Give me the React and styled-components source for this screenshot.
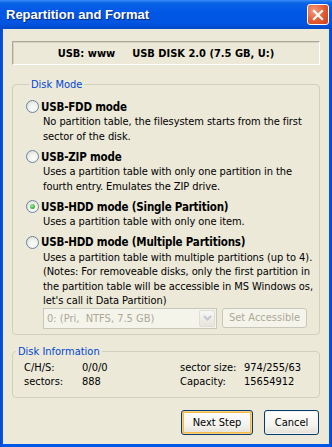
import styled, { createGlobalStyle, css } from 'styled-components';

const GlobalStyle = createGlobalStyle`
  html, body {
    margin: 0;
    padding: 0;
    background: #fff;
  }
  body {
    font-family: "DejaVu Sans Condensed", "DejaVu Sans", sans-serif;
    font-size: 11px;
    color: #000;
  }
`;

const Window = styled.div`
  width: 332px;
  height: 447px;
  display: flex;
  flex-direction: column;
`;

const TitleBar = styled.div`
  height: 29px;
  flex: none;
  display: flex;
  align-items: center;
  justify-content: space-between;
  padding: 0 3px 0 6px;
  background: linear-gradient(
    to bottom,
    #3b8cf5 0,
    #0a62e4 3px,
    #0058e6 40%,
    #0055e0 80%,
    #0348c8 100%
  );
`;

const Title = styled.span`
  font-family: "Liberation Sans", Arial, sans-serif;
  font-weight: bold;
  font-size: 13px;
  color: #fff;
  text-shadow: 1px 1px 0 #0a2a7a;
`;

const CloseButton = styled.button`
  width: 22px;
  height: 21px;
  padding: 0;
  border: 1px solid #fff;
  border-radius: 3px;
  background: radial-gradient(circle at 30% 30%, #f39b7c 0, #e3592f 55%, #c8401b 100%);
  display: flex;
  align-items: center;
  justify-content: center;
`;

const Frame = styled.div`
  flex: 1;
  display: flex;
  padding: 0 3px 3px;
  background: linear-gradient(to right, #0a3fc8, #0058e6 2px, #0058e6 calc(100% - 2px), #0a3fc8);
`;

const Body = styled.div`
  flex: 1;
  background: #ece9d8;
  padding: 12px 9px 0;
  display: flex;
  flex-direction: column;
`;

const DeviceBar = styled.div`
  height: 24px;
  box-sizing: border-box;
  border: 1px solid;
  border-color: #aca899 #fff #fff #aca899;
  box-shadow: inset 1px 1px 0 #d6d3c5;
  display: flex;
  align-items: center;
  justify-content: center;
  gap: 17px;
  font-weight: bold;
  font-size: 11px;
`;

const Group = styled.fieldset`
  margin: ${p => p.$top}px 0 0;
  padding: ${p => p.$pad};
  border: 1px solid #d0d0bf;
  border-radius: 4px;
  min-width: 0;
`;

const Legend = styled.legend`
  color: #0046d5;
  padding: 0 2px;
  margin-left: 3px;
`;

const Option = styled.div`
  display: flex;
  flex-direction: column;
  margin-top: ${p => p.$gap}px;
`;

const OptionHead = styled.label`
  display: flex;
  align-items: center;
  gap: 2px;
  font-weight: bold;
  font-size: 11.5px;
  letter-spacing: -0.2px;
  height: 15px;
`;

const Radio = styled.span`
  width: 13px;
  height: 13px;
  box-sizing: border-box;
  border-radius: 50%;
  border: 1px solid #6a86a4;
  background: radial-gradient(circle at 60% 65%, #fff 0, #f2f2ec 45%, #d6d5cc 100%);
  position: relative;
  flex: none;
  ${p =>
    p.$checked &&
    css`
      &::after {
        content: '';
        position: absolute;
        left: 3px;
        top: 3px;
        width: 5px;
        height: 5px;
        border-radius: 50%;
        background: radial-gradient(circle at 40% 35%, #9cf09c, #2ca42c 75%);
      }
    `}
`;

const Desc = styled.div`
  padding-left: 17px;
  line-height: 14.5px;
  margin-top: 1px;
  letter-spacing: -0.07px;
`;

const PartitionRow = styled.div`
  display: flex;
  gap: 5px;
  padding-left: 17px;
  margin-top: -1px;
`;

const Combo = styled.div`
  width: 174px;
  height: 21px;
  box-sizing: border-box;
  border: 1px solid #c9c7ba;
  background: #f5f4ea;
  display: flex;
  align-items: center;
  justify-content: space-between;
  padding: 0 1px 0 3px;
  color: #aca899;
  white-space: pre;
`;

const ComboArrow = styled.span`
  width: 16px;
  height: 17px;
  border-radius: 2px;
  background: linear-gradient(to bottom, #f7f7f4, #e6e4dc);
  border: 1px solid #e0ded4;
  box-sizing: border-box;
  display: flex;
  align-items: center;
  justify-content: center;
`;

const GhostButton = styled.button`
  width: 85px;
  height: 20px;
  font: inherit;
  color: #aca899;
  background: #f5f4ea;
  border: 1px solid #c9c7ba;
  border-radius: 3px;
  padding: 0;
`;

const InfoGrid = styled.div`
  display: grid;
  grid-template-columns: 58px 98px 64px auto;
  row-gap: 1px;
  line-height: 13px;
  padding-left: 11px;
`;

const Footer = styled.div`
  display: flex;
  justify-content: flex-end;
  gap: 11px;
  margin-top: 12px;
  padding-right: 1px;
`;

const XPButton = styled.button`
  width: ${p => p.$w}px;
  height: 25px;
  font: inherit;
  font-size: 11px;
  color: #000;
  padding: 0;
  border: 1px solid #003c74;
  border-radius: 3px;
  background: linear-gradient(to bottom, #fff 0, #f4f3ee 60%, #e3e1d7 100%);
  ${p =>
    p.$default
      ? css`
          box-shadow: inset 0 0 0 1px #f8d080, inset 0 0 0 2px #f5b84a;
        `
      : css`
          box-shadow: inset 0 0 0 1px #f3f2ee;
        `}
`;

const options = [
  {
    title: 'USB-FDD mode',
    desc: 'No partition table, the filesystem starts from the first sector of the disk.',
  },
  {
    title: 'USB-ZIP mode',
    desc: 'Uses a partition table with only one partition in the fourth entry. Emulates the ZIP drive.',
  },
  {
    title: 'USB-HDD mode (Single Partition)',
    desc: 'Uses a partition table with only one item.',
    checked: true,
  },
  {
    title: 'USB-HDD mode (Multiple Partitions)',
    desc:
      "Uses a partition table with multiple partitions (up to 4). (Notes: For removeable disks, only the first partition in the partition table will be accessible in MS Windows os, let's call it Data Partition)",
  },
];

const CloseIcon = () => (
  <svg width="12" height="12" viewBox="0 0 12 12">
    <path d="M2 2 L10 10 M10 2 L2 10" stroke="#fff" strokeWidth="2.2" strokeLinecap="square" />
  </svg>
);

const Chevron = () => (
  <svg width="9" height="6" viewBox="0 0 9 6">
    <path d="M1 1 L4.5 4.5 L8 1" stroke="#c4c8d4" strokeWidth="2" fill="none" />
  </svg>
);

export default function App() {
  return (
    <>
      <GlobalStyle />
      <Window>
        <TitleBar>
          <Title>Repartition and Format</Title>
          <CloseButton type="button">
            <CloseIcon />
          </CloseButton>
        </TitleBar>
        <Frame>
          <Body>
            <DeviceBar>
              <span>USB: www</span>
              <span>USB DISK 2.0 (7.5 GB, U:)</span>
            </DeviceBar>

            <Group $top={13} $pad="0 6px 5px 13px">
              <Legend>Disk Mode</Legend>
              {options.map((o, i) => (
                <Option key={o.title} $gap={i === 0 ? 8 : 5}>
                  <OptionHead>
                    <Radio $checked={o.checked} />
                    {o.title}
                  </OptionHead>
                  <Desc>{o.desc}</Desc>
                </Option>
              ))}
              <PartitionRow>
                <Combo>
                  {'0: (Pri,  NTFS, 7.5 GB)'}
                  <ComboArrow>
                    <Chevron />
                  </ComboArrow>
                </Combo>
                <GhostButton type="button" disabled>
                  Set Accessible
                </GhostButton>
              </PartitionRow>
            </Group>

            <Group $top={10} $pad="3px 10px 9px 0">
              <Legend>Disk Information</Legend>
              <InfoGrid>
                <span>C/H/S:</span>
                <span>0/0/0</span>
                <span>sector size:</span>
                <span>974/255/63</span>
                <span>sectors:</span>
                <span>888</span>
                <span>Capacity:</span>
                <span>15654912</span>
              </InfoGrid>
            </Group>

            <Footer>
              <XPButton type="button" $w={72} $default>
                Next Step
              </XPButton>
              <XPButton type="button" $w={55}>
                Cancel
              </XPButton>
            </Footer>
          </Body>
        </Frame>
      </Window>
    </>
  );
}
